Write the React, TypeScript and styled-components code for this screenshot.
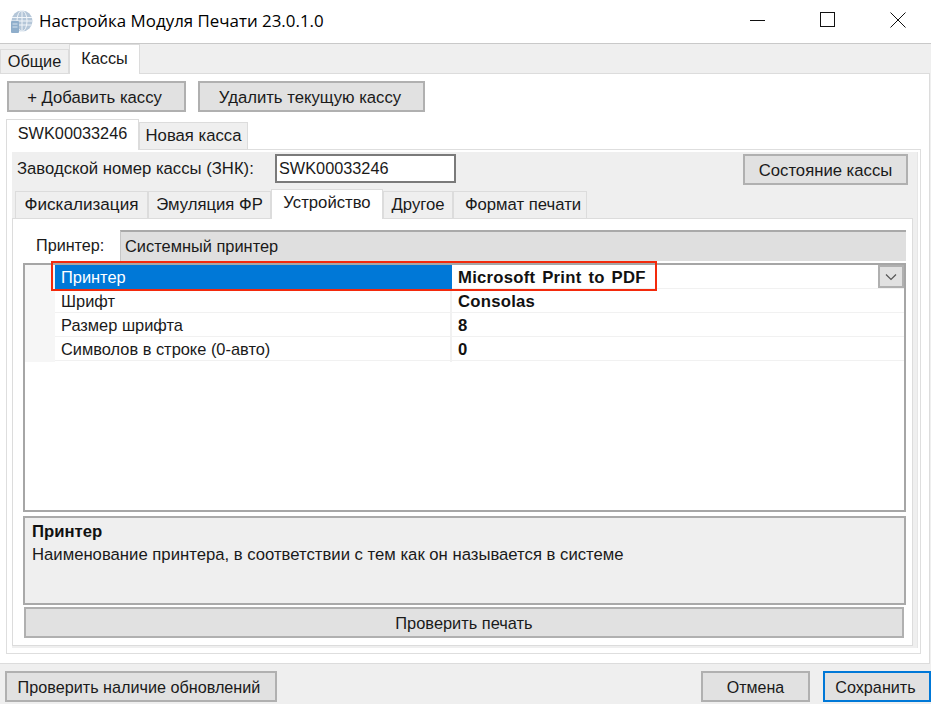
import styled, { createGlobalStyle } from "styled-components";

const GlobalStyle = createGlobalStyle`
    html, body {
        margin: 0;
        padding: 0;
        background: #ffffff;
    }
    * {
        box-sizing: border-box;
    }
`;

const Window = styled.div`
    width: 931px;
    height: 704px;
    overflow: hidden;
    display: flex;
    flex-direction: column;
    background: #efefef;
    color: #1a1a1a;
    font-family: "Liberation Sans", Arial, sans-serif;
    font-size: 16.7px;
`;

const TitleBar = styled.header`
    height: 44px;
    flex: none;
    display: flex;
    align-items: center;
    background: #ffffff;
    border-bottom: 1px solid #c9c9c9;
    padding-left: 9px;
`;

const TitleText = styled.span`
    margin-left: 6px;
    margin-top: -2px;
    font-family: "Open Sans", sans-serif;
    font-size: 16.9px;
    color: #000000;
`;

const WindowControls = styled.div`
    margin-left: auto;
    display: flex;
    align-items: center;
    gap: 54px;
    padding-right: 25px;
    margin-top: -4px;
`;

const TabStrip = styled.div<{ $h: number; $pl?: number }>`
    height: ${(p) => p.$h}px;
    flex: none;
    display: flex;
    align-items: flex-end;
    padding-left: ${(p) => p.$pl ?? 0}px;
    position: relative;
    z-index: 1;
`;

const Tab = styled.div<{ $w: number; $active?: boolean; $drop?: number; $size?: number; $shift?: number }>`
    width: ${(p) => p.$w}px;
    height: ${(p) => (p.$active ? "100%" : `calc(100% - ${p.$drop ?? 4}px)`)};
    display: flex;
    align-items: center;
    justify-content: center;
    background: ${(p) => (p.$active ? "#ffffff" : "#efefef")};
    border: 1px solid #dcdcdc;
    border-bottom: ${(p) => (p.$active ? "none" : "1px solid #dcdcdc")};
    padding-bottom: ${(p) => (p.$active ? 3 : 0)}px;
    padding-left: ${(p) => p.$shift ?? 0}px;
    font-size: ${(p) => p.$size ?? 16.7}px;
    white-space: nowrap;
`;

const OuterPanel = styled.section`
    height: 591px;
    flex: none;
    width: 930px;
    margin-top: -1px;
    background: #ffffff;
    border: 1px solid #dcdcdc;
    border-left: none;
    padding: 7px 0 0 6px;
    display: flex;
    flex-direction: column;
`;

const ButtonRow = styled.div`
    display: flex;
    gap: 12px;
    padding-left: 1px;
    margin-bottom: 7px;
`;

const Button = styled.button<{ $w: number; $primary?: boolean; $size?: number; $pr?: number }>`
    width: ${(p) => p.$w}px;
    height: 31px;
    flex: none;
    padding: 2px ${(p) => p.$pr ?? 0}px 0 0;
    background: #e1e1e1;
    border: ${(p) => (p.$primary ? "2px solid #0078d7" : "2px solid #b0b0b0")};
    font-family: inherit;
    font-size: ${(p) => p.$size ?? 16.7}px;
    color: #1a1a1a;
`;

const CashPanel = styled.div`
    width: 915px;
    height: 505px;
    flex: none;
    margin-top: -1px;
    background: #ffffff;
    border: 1px solid #dedede;
    padding: 2px 2px 5px 5px;
`;

const CashInner = styled.div`
    height: 100%;
    background: #efefef;
    border-right: 1px solid #e6e6e6;
    display: flex;
    flex-direction: column;
`;

const SerialRow = styled.div`
    height: 37px;
    flex: none;
    display: flex;
    align-items: flex-start;
    padding: 2px 9px 0 5px;
`;

const SerialLabel = styled.label`
    width: 258px;
    line-height: 29px;
    white-space: nowrap;
`;

const SerialInput = styled.div`
    width: 181px;
    height: 29px;
    background: #ffffff;
    border: 2px solid #7a7a7a;
    padding-left: 2px;
    line-height: 25px;
    font-size: 16.3px;
`;

const StatusSlot = styled.div`
    margin-left: auto;
`;

const DevicePanel = styled.div`
    width: 901px;
    height: 428px;
    margin-top: -1px;
    background: #ffffff;
    border: 1px solid #dcdcdc;
    padding: 10px 6px 0 10px;
    display: flex;
    flex-direction: column;
`;

const PrinterRow = styled.div`
    height: 32px;
    flex: none;
    display: flex;
    align-items: center;
`;

const PrinterLabel = styled.span`
    width: 97px;
    padding-left: 13px;
    font-size: 16.2px;
`;

const PrinterField = styled.div`
    flex: 1;
    height: 31px;
    background: #dfdfdf;
    border-top: 2px solid #a9a9a9;
    border-left: 1px solid #c6c6c6;
    padding-left: 4px;
    line-height: 28px;
    font-size: 16.4px;
`;

const PropertyGrid = styled.div`
    height: 249px;
    flex: none;
    margin-top: 2px;
    position: relative;
    background: #ffffff;
    border: 2px solid #a6a6a6;
`;

const PropertyRow = styled.div`
    height: 24px;
    display: grid;
    grid-template-columns: 30px 397px 1fr;
    border-bottom: 1px solid #f1f1f1;
`;

const Gutter = styled.div`
    background: #f6f6f6;
`;

const PropertyName = styled.div<{ $selected?: boolean }>`
    padding-left: 6px;
    line-height: 25px;
    font-size: 16.4px;
    background: ${(p) => (p.$selected ? "#0078d7" : "transparent")};
    color: ${(p) => (p.$selected ? "#ffffff" : "#1a1a1a")};
    border-right: ${(p) => (p.$selected ? "none" : "2px solid #f1f1f1")};
    white-space: nowrap;
`;

const PropertyValue = styled.div`
    padding-left: 6px;
    line-height: 25px;
    font-weight: 700;
    color: #111111;
    word-spacing: 2px;
    letter-spacing: 0.25px;
`;

const Highlight = styled.div`
    position: absolute;
    left: 26px;
    top: -4px;
    width: 606px;
    height: 30px;
    border: 2px solid #f32a0c;
    pointer-events: none;
`;

const DropButton = styled.div`
    position: absolute;
    right: 0;
    top: 0;
    width: 26px;
    height: 23px;
    display: flex;
    align-items: center;
    justify-content: center;
    background: #e1e1e1;
    border: 2px solid #b0b0b0;
`;

const HelpBox = styled.div`
    height: 89px;
    flex: none;
    margin-top: 4px;
    background: #efefef;
    border: 2px solid #a9a9a9;
    padding: 2px 7px;
    line-height: 23px;
`;

const HelpTitle = styled.div`
    font-weight: 700;
    color: #111111;
`;

const TestSlot = styled.div`
    margin-top: 2px;
    padding-left: 1px;
`;

const Footer = styled.footer`
    flex: 1;
    display: flex;
    align-items: flex-start;
    padding: 7px 0 0 5px;
`;

const FooterRight = styled.div`
    margin-left: auto;
    display: flex;
    gap: 13px;
`;

function AppIcon() {
    return (
        <svg width="24" height="24" viewBox="0 0 24 24" fill="none">
            <circle cx="13" cy="11" r="10.5" fill="#b4c6d8" />
            <g stroke="#f2f6fa" strokeWidth="1">
                <path d="M3 7.5h20M2.5 11h21M3 15h20" />
                <ellipse cx="13" cy="11" rx="5" ry="10.5" />
                <path d="M13 .5v21" />
            </g>
            <rect x="2" y="11" width="8" height="12" rx="1" fill="#8faecb" />
            <path d="M3.5 14h5M3.5 17h5" stroke="#d8e4ef" strokeWidth="1" />
        </svg>
    );
}

function WindowButtons() {
    return (
        <WindowControls>
            <svg width="16" height="16" viewBox="0 0 16 16">
                <path d="M0 8.5h15" stroke="#111" strokeWidth="1" />
            </svg>
            <svg width="16" height="16" viewBox="0 0 16 16">
                <rect x="0.5" y="0.5" width="14" height="14" fill="none" stroke="#111" strokeWidth="1" />
            </svg>
            <svg width="16" height="16" viewBox="0 0 16 16">
                <path d="M0.5 0.5l15 15M15.5 0.5l-15 15" stroke="#111" strokeWidth="1" />
            </svg>
        </WindowControls>
    );
}

const properties = [
    { name: "Принтер", value: "Microsoft Print to PDF", selected: true },
    { name: "Шрифт", value: "Consolas" },
    { name: "Размер шрифта", value: "8" },
    { name: "Символов в строке (0-авто)", value: "0" },
];

export default function App() {
    return (
        <Window>
            <GlobalStyle />
            <TitleBar>
                <AppIcon />
                <TitleText>Настройка Модуля Печати 23.0.1.0</TitleText>
                <WindowButtons />
            </TitleBar>

            <TabStrip $h={30}>
                <Tab $w={69} $drop={5} $size={16.3}>Общие</Tab>
                <Tab $w={71} $active $size={16.3}>Кассы</Tab>
            </TabStrip>

            <OuterPanel>
                <ButtonRow>
                    <Button $w={179} $pr={4}>+ Добавить кассу</Button>
                    <Button $w={227} $pr={3}>Удалить текущую кассу</Button>
                </ButtonRow>

                <TabStrip $h={31}>
                    <Tab $w={133} $active $size={16.3}>SWK00033246</Tab>
                    <Tab $w={109} $drop={3}>Новая касса</Tab>
                </TabStrip>

                <CashPanel>
                    <CashInner>
                        <SerialRow>
                            <SerialLabel>Заводской номер кассы (ЗНК):</SerialLabel>
                            <SerialInput>SWK00033246</SerialInput>
                            <StatusSlot>
                                <Button $w={165}>Состояние кассы</Button>
                            </StatusSlot>
                        </SerialRow>

                        <TabStrip $h={30} $pl={3}>
                            <Tab $w={133} $drop={2} $size={17.1}>Фискализация</Tab>
                            <Tab $w={123} $drop={2}>Эмуляция ФР</Tab>
                            <Tab $w={112} $active>Устройство</Tab>
                            <Tab $w={70} $drop={2}>Другое</Tab>
                            <Tab $w={134} $drop={2} $shift={6}>Формат печати</Tab>
                        </TabStrip>

                        <DevicePanel>
                            <PrinterRow>
                                <PrinterLabel>Принтер:</PrinterLabel>
                                <PrinterField>Системный принтер</PrinterField>
                            </PrinterRow>

                            <PropertyGrid>
                                {properties.map((row) => (
                                    <PropertyRow key={row.name}>
                                        <Gutter />
                                        <PropertyName $selected={row.selected}>{row.name}</PropertyName>
                                        <PropertyValue>{row.value}</PropertyValue>
                                    </PropertyRow>
                                ))}
                                <DropButton>
                                    <svg width="12" height="8" viewBox="0 0 12 8">
                                        <path d="M1 1.5l5 5 5-5" fill="none" stroke="#555" strokeWidth="1.2" />
                                    </svg>
                                </DropButton>
                                <Highlight />
                            </PropertyGrid>

                            <HelpBox>
                                <HelpTitle>Принтер</HelpTitle>
                                Наименование принтера, в соответствии с тем как он называется в системе
                            </HelpBox>

                            <TestSlot>
                                <Button $w={880} $size={16.4}>Проверить печать</Button>
                            </TestSlot>
                        </DevicePanel>
                    </CashInner>
                </CashPanel>
            </OuterPanel>

            <Footer>
                <Button $w={272} $size={16.2} $pr={4}>Проверить наличие обновлений</Button>
                <FooterRight>
                    <Button $w={109} $size={16}>Отмена</Button>
                    <Button $w={108} $primary $size={16.2} $pr={3}>Сохранить</Button>
                </FooterRight>
            </Footer>
        </Window>
    );
}
